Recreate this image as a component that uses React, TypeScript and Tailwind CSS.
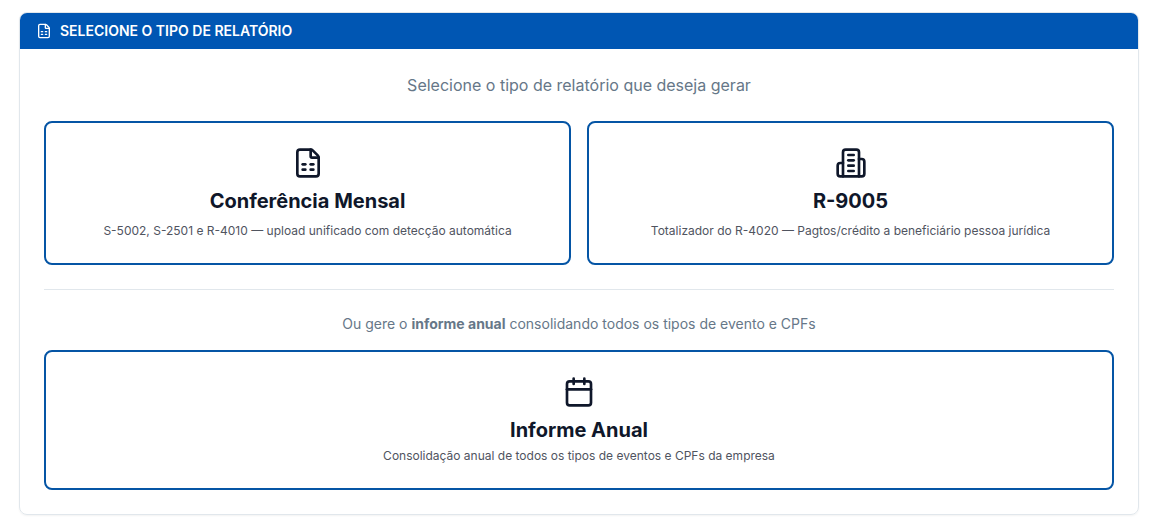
import React from "react";
import type { ReactNode } from "react";
import { FileSpreadsheet, Calendar } from "lucide-react";

type OptionProps = { icon: ReactNode; title: string; text: string; className?: string; textClassName: string };

function BuildingIcon() {
  return (
    <svg width="32" height="32" viewBox="0 0 24 24" fill="none" stroke="currentColor" strokeWidth="2" strokeLinecap="round" strokeLinejoin="round">
      <path d="M6 22V4a2 2 0 0 1 2-2h8a2 2 0 0 1 2 2v18Z" />
      <path d="M6 12H4a2 2 0 0 0-2 2v6a2 2 0 0 0 2 2h2" />
      <path d="M18 9h2a2 2 0 0 1 2 2v9a2 2 0 0 1-2 2h-2" />
      <path d="M10 6h4" />
      <path d="M10 10h4" />
      <path d="M10 14h4" />
      <path d="M10 18h4" />
    </svg>
  );
}

function Option({ icon, title, text, className = "", textClassName }: OptionProps) {
  return (
    <button type="button" className={`flex flex-col items-center rounded-lg border-2 border-[#0555a5] bg-white pt-6 text-[#0f172a] ${className}`}>
      {icon}
      <span className="mt-2 text-xl leading-7 font-bold">{title}</span>
      <span className={`text-xs text-[#50545f] ${textClassName}`}>{text}</span>
    </button>
  );
}

export default function App() {
  return (
    <main className="h-[524px] bg-white pt-3 pr-[31px] pl-[19px] font-['Inter',sans-serif]">
      <section className="h-[503px] overflow-hidden rounded-lg border border-[#e1e7ec] shadow-xs">
        <header className="flex h-9 items-center gap-2 bg-[#0056b3] px-4 text-sm font-semibold text-white">
          <FileSpreadsheet size={16} />
          <h1>SELECIONE O TIPO DE RELATÓRIO</h1>
        </header>
        <div className="px-6 pt-6">
          <p className="text-center text-base text-[#667788]">Selecione o tipo de relatório que deseja gerar</p>
          <div className="mt-6 grid grid-cols-2 gap-4">
            <Option
              icon={<FileSpreadsheet size={32} />}
              title="Conferência Mensal"
              text="S-5002, S-2501 e R-4010 — upload unificado com detecção automática"
              className="h-36"
              textClassName="mt-2"
            />
            <Option
              icon={<BuildingIcon />}
              title="R-9005"
              text="Totalizador do R-4020 — Pagtos/crédito a beneficiário pessoa jurídica"
              className="h-36"
              textClassName="mt-2"
            />
          </div>
          <div className="mt-6 border-t border-[#e1e7ec] pt-6 text-center text-sm text-[#667788]">
            Ou gere o <strong>informe anual</strong> consolidando todos os tipos de evento e CPFs
          </div>
          <Option
            icon={<Calendar size={32} />}
            title="Informe Anual"
            text="Consolidação anual de todos os tipos de eventos e CPFs da empresa"
            className="mt-4 h-[140px] w-full"
            textClassName="mt-1"
          />
        </div>
      </section>
    </main>
  );
}
